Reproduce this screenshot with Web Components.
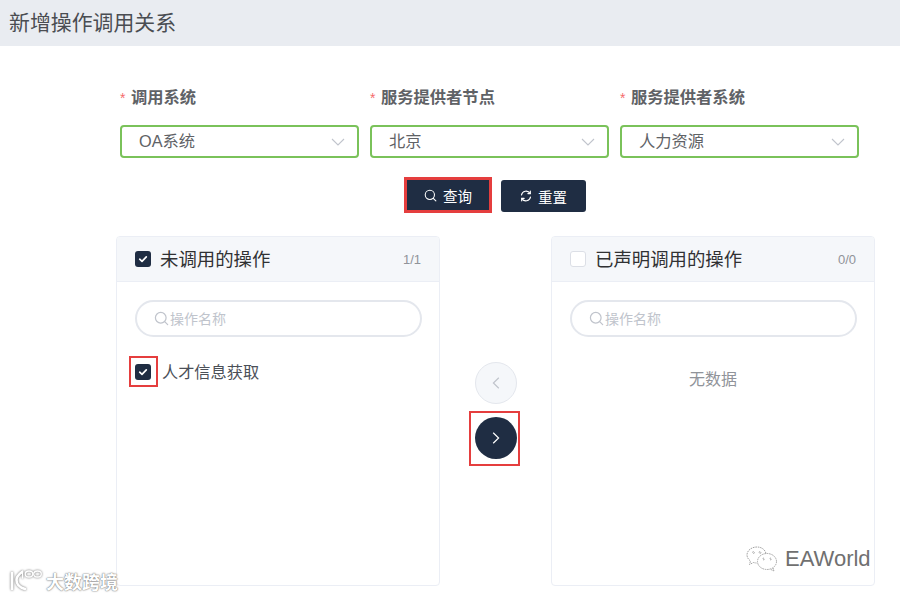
<!DOCTYPE html>
<html lang="zh"><head><meta charset="utf-8"><title>新增操作调用关系</title>
<style>
html,body{margin:0;padding:0;background:#fff;font-family:"Liberation Sans","Noto Sans CJK SC",sans-serif}
</style></head><body>
<relation-page></relation-page>
<script>
const FONT='"Liberation Sans","Noto Sans CJK SC",sans-serif';
const ic={
 search:(s,c)=>`<svg width="${s}" height="${s}" viewBox="0 0 16 16" fill="none" stroke="${c}" stroke-width="1.3" stroke-linecap="round"><circle cx="7.2" cy="7.2" r="5.7"/><path d="M11.4 11.4L14.6 14.6"/></svg>`,
 refresh:`<svg width="12" height="12" viewBox="0 0 12 12" fill="none" stroke="#fff" stroke-width="1.2" stroke-linecap="round"><path d="M1.5 5A4.6 4.6 0 0 1 10 3.4"/><path d="M10.5 7A4.6 4.6 0 0 1 2 8.6"/><path d="M10.3 1.2V3.6H7.9" /><path d="M1.7 10.8V8.4H4.1"/></svg>`,
 chev:`<svg width="14" height="8" viewBox="0 0 14 8" fill="none" stroke="#c0c4cc" stroke-width="1.1"><path d="M1 1L7 7L13 1"/></svg>`,
 left:`<svg width="8" height="12" viewBox="0 0 8 12" fill="none" stroke="#c0c4cc" stroke-width="1.2"><path d="M6.8 .8L1.4 6L6.8 11.2"/></svg>`,
 right:`<svg width="8" height="12" viewBox="0 0 8 12" fill="none" stroke="#fff" stroke-width="1.2"><path d="M1.2 .8L6.6 6L1.2 11.2"/></svg>`
};
function def(name,html){customElements.define(name,class extends HTMLElement{
 connectedCallback(){ if(this.shadowRoot)return; const r=this.attachShadow({mode:'open'}); r.innerHTML=html(this); }
});}

def('page-title',()=>`<style>:host{display:flex;align-items:center;height:46px;box-sizing:border-box;background:#e9ecf1;padding:0 9px 4px;color:#4a4d52;font-size:20.9px;font-family:${FONT}}</style><slot></slot>`);

def('form-select',h=>`<style>
:host{display:block;width:239px;font-family:${FONT}}
.l{height:20px;line-height:20px;font-size:16.3px;font-weight:700;color:#606266;white-space:nowrap}
.l i{font-style:normal;color:#f56c6c;font-weight:400;font-size:14px;margin-right:5.5px}
.s{margin-top:18px;height:33px;box-sizing:border-box;border:2px solid #7ac25a;border-radius:4px;display:flex;align-items:center;justify-content:space-between;padding:0 12px 0 17px;font-size:16.3px;color:#606266}
.s span{margin-bottom:3px}
svg{display:block}
</style><div class="l"><i>*</i>${h.getAttribute('label')}</div><div class="s"><span>${h.getAttribute('value')}</span>${ic.chev}</div>`);

def('dark-button',h=>`<style>
:host{display:block;font-family:${FONT}}
.b{display:flex;align-items:center;justify-content:center;gap:6px;height:32px;width:${h.getAttribute('w')}px;border-radius:3px;background:#1f2d43;color:#fff;font-size:14.5px;box-sizing:border-box}
:host([marked]) .b{border-radius:0;outline:3px solid #e53e3e;outline-offset:0;height:30px}
svg{display:block}
</style><div class="b">${h.getAttribute('icon')==='search'?ic.search(13,'#fff'):ic.refresh}<span>${h.textContent}</span></div>`);

def('check-box',h=>`<style>
:host{display:block;width:16px;height:16px;box-sizing:border-box;border-radius:3px;position:relative;flex:none}
:host([checked]){background:#1f2d43}
:host(:not([checked])){border:1px solid #dcdfe6;background:#fff}
:host([marked])::after{content:"";position:absolute;left:-6px;top:-8px;width:29px;height:31px;box-sizing:border-box;border:2px solid #e53e3e}
svg{display:block}
</style>${h.hasAttribute('checked')?`<svg width="16" height="16" viewBox="0 0 16 16" fill="none" stroke="#fff" stroke-width="1.7" stroke-linecap="round" stroke-linejoin="round"><path d="M4.7 8.2L7 10.3L11.3 5.9"/></svg>`:''}`);

def('transfer-panel',h=>`<style>
:host{display:flex;flex-direction:column;width:324px;height:350px;box-sizing:border-box;border:1px solid #ebeef5;border-radius:4px;font-family:${FONT};overflow:hidden;background:#fff}
.h{height:45px;flex:none;box-sizing:border-box;background:#f5f7fa;border-bottom:1px solid #ebeef5;display:flex;align-items:center;padding:0 18px;gap:9px;color:#303133;font-size:18.4px}
.h b{font-weight:400;flex:1;white-space:nowrap;margin-bottom:2px}
.h small{font-size:13px;color:#909399}
.q{margin:18px 17px 0 18px;height:37px;box-sizing:border-box;border:2px solid #e4e7ed;border-radius:19px;display:flex;align-items:center;padding-left:17px;gap:1px;color:#c0c4cc;font-size:14px}
.q span{margin-bottom:1px}
svg{display:block}
.c{flex:1;display:flex;flex-direction:column}
</style><div class="h"><check-box ${h.hasAttribute('checked')?'checked':''}></check-box><b>${h.getAttribute('title')}</b><small>${h.getAttribute('count')}</small></div>
<div class="q">${ic.search(15,'#c0c4cc')}<span>操作名称</span></div><div class="c"><slot></slot></div>`);

def('list-item',h=>`<style>
:host{display:flex;align-items:center;gap:11px;margin:27px 0 0 18px;height:16px;font-size:16.2px;color:#4b5058;font-family:${FONT}}
span{margin-bottom:2px}
</style><check-box checked marked></check-box><span><slot></slot></span>`);

def('empty-text',()=>`<style>:host{display:block;text-align:center;margin-top:33px;font-size:16px;line-height:20px;color:#909399;font-family:${FONT}}</style><slot></slot>`);

def('round-button',h=>{const n=h.getAttribute('dir')==='right';return `<style>
:host{display:flex;align-items:center;justify-content:center;width:42px;height:42px;box-sizing:border-box;border-radius:50%;position:relative;background:${n?'#1f2d43':'#f5f7fa'};${n?'':'border:1px solid #e4e7ed;'}}
:host([marked])::after{content:"";position:absolute;left:-6px;top:-6px;width:51px;height:55px;box-sizing:border-box;border:2px solid #e53e3e}
svg{display:block}
</style>${n?ic.right:ic.left}`});

def('water-marks',()=>`<style>
:host{display:block}
.a,.b{position:absolute;font-family:${FONT};display:flex;align-items:center}
.a{left:8px;top:568px;color:#fff;font-size:18px;gap:3px;font-weight:700;text-shadow:0 0 2px #777,0 0 1px #777}
.a svg{filter:drop-shadow(0 0 1px #666)}
.b{left:746px;top:546px;gap:7px;font-size:22px;color:#707070}
.a span{margin-bottom:-3px}
svg{display:block}
</style><div class="a"><svg width="35" height="23" viewBox="0 0 35 23" fill="none" stroke="#fff" stroke-width="2.6" stroke-linecap="round"><path d="M4 5V21"/><path d="M14 4C10 7 8.500 9.500 8.500 12C8.500 16 12 19.500 17 21"/><path d="M14.500 3V10" stroke-width="1.300"/><ellipse cx="21" cy="6" rx="3.800" ry="3" stroke-width="1.300"/><ellipse cx="29.500" cy="6" rx="3.800" ry="3" stroke-width="1.300"/></svg><span>大数跨境</span></div>
<div class="b"><svg width="32" height="26" viewBox="0 0 32 26" fill="none" stroke="#9a9a9a" stroke-width=".9" stroke-dasharray="1.600 .8"><path d="M20 7.500C19 3.500 15.500 1 11 1C5.500 1 1 4.500 1 9C1 11.500 2.500 13.500 4.500 15L3.500 18.500L7.500 16.500C8.500 16.800 9.500 17 10.500 17"/><ellipse cx="21" cy="15.500" rx="9.500" ry="8"/><path d="M27 22L28 25L24.500 23.300"/><circle cx="7.500" cy="6.500" r=".9"/><circle cx="14" cy="6.500" r=".9"/><circle cx="17.500" cy="13" r=".8"/><circle cx="24.500" cy="13" r=".8"/></svg><span>EAWorld</span></div>`);

def('relation-page',()=>`<style>
:host{display:block;width:900px;height:597px;overflow:hidden;position:relative;background:#fff}
.f{display:flex;gap:11px;padding:41px 0 0 120px}
.bs{display:flex;gap:12px;margin-top:22px;padding-left:407px}
.t{display:flex;align-items:center;padding-left:116px;margin-top:24px}
.m{width:111px;display:flex;flex-direction:column;align-items:center;gap:13px;padding-bottom:2px;box-sizing:border-box}
</style>
<page-title>新增操作调用关系</page-title>
<div class="f">
<form-select label="调用系统" value="OA系统"></form-select>
<form-select label="服务提供者节点" value="北京"></form-select>
<form-select label="服务提供者系统" value="人力资源"></form-select>
</div>
<div class="bs"><dark-button icon="search" w="82" marked>查询</dark-button><dark-button icon="refresh" w="85">重置</dark-button></div>
<div class="t">
<transfer-panel title="未调用的操作" count="1/1" checked><list-item>人才信息获取</list-item></transfer-panel>
<div class="m"><round-button dir="left"></round-button><round-button dir="right" marked></round-button></div>
<transfer-panel title="已声明调用的操作" count="0/0"><empty-text>无数据</empty-text></transfer-panel>
</div>
<water-marks></water-marks>`);
</script></body></html>
